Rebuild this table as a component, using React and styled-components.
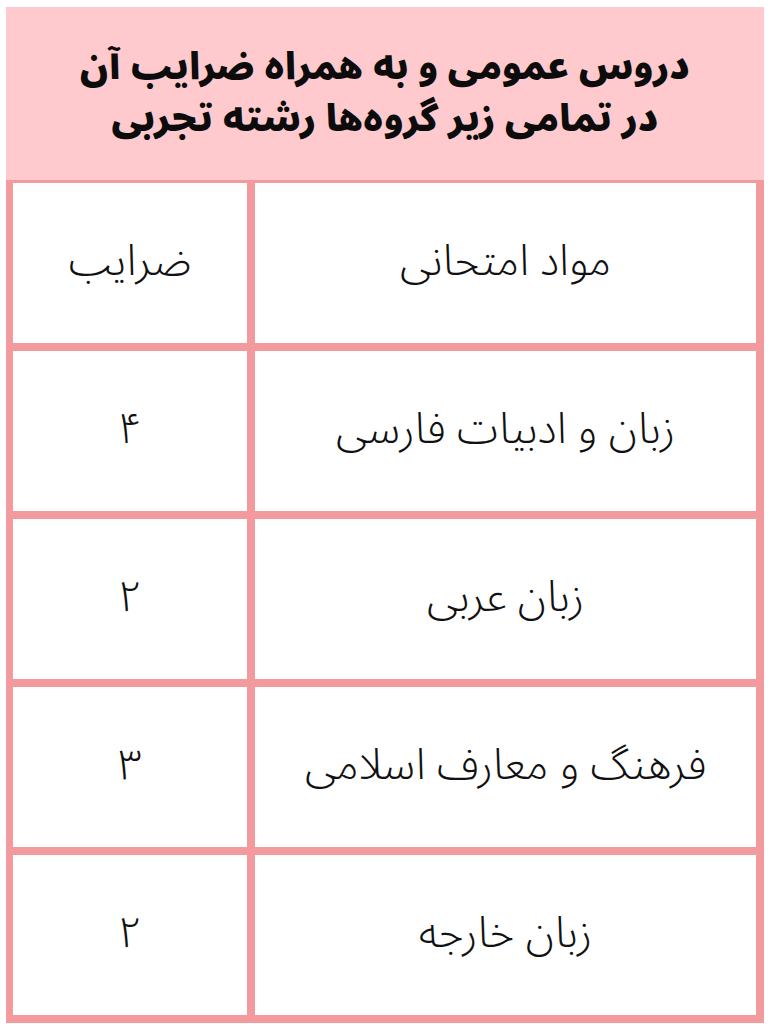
import { createGlobalStyle, styled } from "styled-components";

const GlobalStyle = createGlobalStyle`
    html, body {
        margin: 0;
        padding: 0;
        background: #fff;
    }
    body {
        font-family: "Noto Sans Arabic", "DejaVu Sans", sans-serif;
        color: #111;
    }
`;

const Sheet = styled.div`
    direction: rtl;
    width: 758px;
    margin: 7px 8px 0 6px;
`;

const Header = styled.div`
    height: 173px;
    background-color: #ffcacd;
    display: flex;
    flex-direction: column;
    align-items: center;
    justify-content: center;
    padding-bottom: 2px;
    box-sizing: border-box;
`;

const HeaderLine = styled.div`
    font-weight: 900;
    font-size: 37px;
    line-height: 52px;
    color: #0c0c0c;
`;

const Grid = styled.div`
    display: grid;
    grid-template-columns: 501px 234px;
    grid-auto-rows: 160px;
    gap: 8px;
    padding: 3px 8px 8px 7px;
    background-color: #f29a9e;
`;

const Cell = styled.div`
    background-color: #fff;
    display: flex;
    align-items: center;
    justify-content: center;
    font-size: 43px;
    font-weight: 350;
    color: #111;
    padding-bottom: 4px;
    box-sizing: border-box;
`;

const rows = [
    ["مواد امتحانی", "ضرایب"],
    ["زبان و ادبیات فارسی", "۴"],
    ["زبان عربی", "۲"],
    ["فرهنگ و معارف اسلامی", "۳"],
    ["زبان خارجه", "۲"],
];

export default function App() {
    return (
        <>
            <GlobalStyle />
            <Sheet>
                <Header>
                    <HeaderLine>دروس عمومی و به همراه ضرایب آن</HeaderLine>
                    <HeaderLine>در تمامی زیر گروه‌ها رشته تجربی</HeaderLine>
                </Header>
                <Grid>
                    {rows.map(([subject, factor]) => [
                        <Cell key={subject}>{subject}</Cell>,
                        <Cell key={subject + "-f"}>{factor}</Cell>,
                    ])}
                </Grid>
            </Sheet>
        </>
    );
}
